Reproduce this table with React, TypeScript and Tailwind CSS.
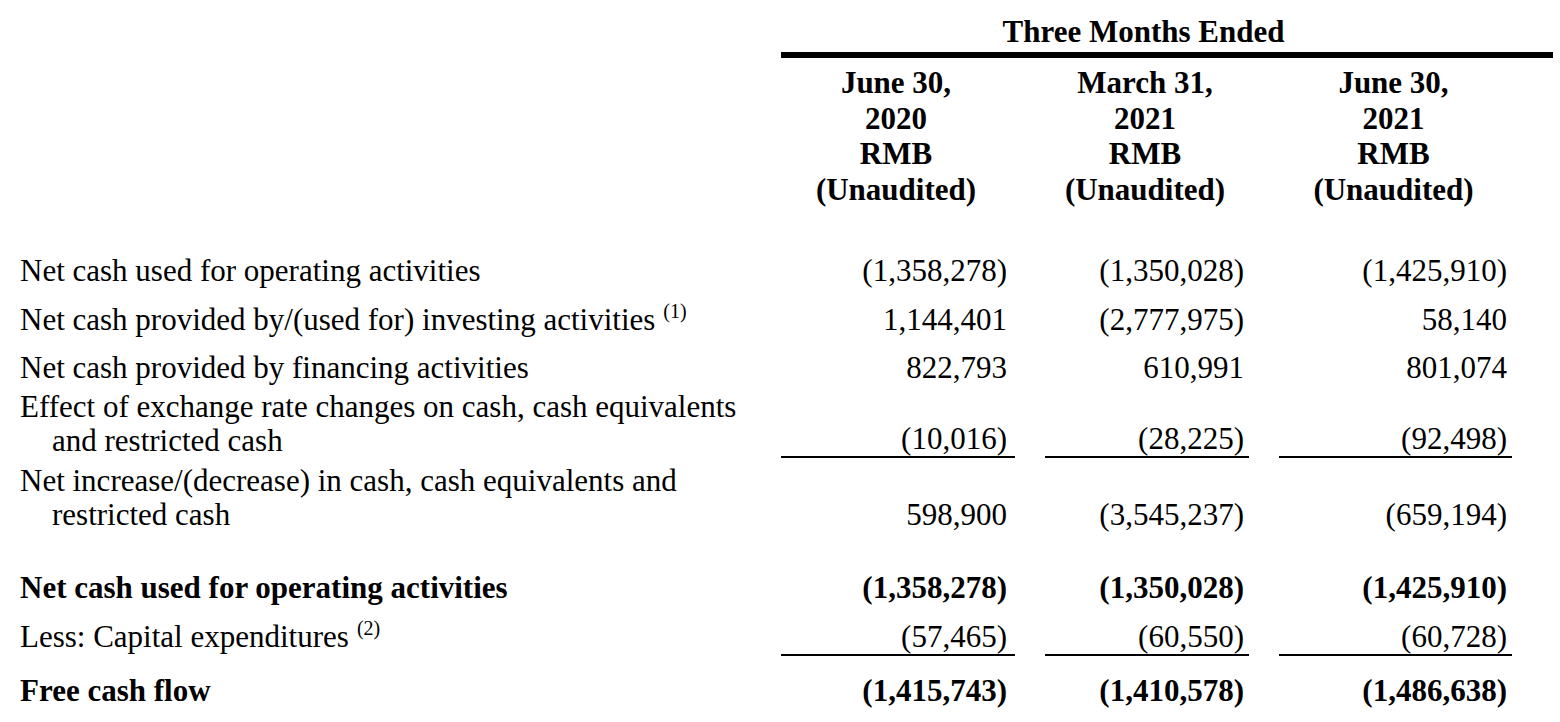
import React from "react";

type Row = {
  label: React.ReactNode;
  values: string[];
  bold?: boolean;
  rule?: boolean;
  gap: string;
};

const grid = "grid grid-cols-[731px_234px_204px_233px] gap-x-[30px]";
const pads = ["pr-[8px]", "pr-[5px]", "pr-[5px]"];

const Note = ({ n }: { n: number }) => (
  <sup className="text-[20px] ml-[8px] -top-[12px]">({n})</sup>
);

const rows: Row[] = [
  {
    label: "Net cash used for operating activities",
    values: ["(1,358,278)", "(1,350,028)", "(1,425,910)"],
    gap: "mt-[47px]",
  },
  {
    label: (
      <>
        Net cash provided by/(used for) investing activities
        <Note n={1} />
      </>
    ),
    values: ["1,144,401", "(2,777,975)", "58,140"],
    gap: "mt-[15px]",
  },
  {
    label: "Net cash provided by financing activities",
    values: ["822,793", "610,991", "801,074"],
    gap: "mt-[14px]",
  },
  {
    label: "Effect of exchange rate changes on cash, cash equivalents and restricted cash",
    values: ["(10,016)", "(28,225)", "(92,498)"],
    rule: true,
    gap: "mt-[5px]",
  },
  {
    label: "Net increase/(decrease) in cash, cash equivalents and restricted cash",
    values: ["598,900", "(3,545,237)", "(659,194)"],
    gap: "mt-[6px]",
  },
  {
    label: "Net cash used for operating activities",
    values: ["(1,358,278)", "(1,350,028)", "(1,425,910)"],
    bold: true,
    gap: "mt-[39px]",
  },
  {
    label: (
      <>
        Less: Capital expenditures
        <Note n={2} />
      </>
    ),
    values: ["(57,465)", "(60,550)", "(60,728)"],
    rule: true,
    gap: "mt-[15px]",
  },
  {
    label: "Free cash flow",
    values: ["(1,415,743)", "(1,410,578)", "(1,486,638)"],
    bold: true,
    gap: "mt-[18px]",
  },
];

const heads = [
  ["June 30,", "2020"],
  ["March 31,", "2021"],
  ["June 30,", "2021"],
];

export default function App() {
  return (
    <div className="w-[1560px] h-[722px] overflow-hidden bg-white text-black pl-[20px] pt-[14px] font-['Liberation_Serif','Times_New_Roman',serif] text-[31px]">
      {/* column headings */}
      <div className={grid}>
        <div />
        <div className="col-span-3 text-center font-bold leading-[36px] pr-[6px]">
          Three Months Ended
        </div>
        <div />
        <div className="col-span-3 mt-[2px] -mr-[41px] h-[6px] bg-black" />
        <div />
        {heads.map((h, i) => (
          <div
            key={i}
            className="mt-[7px] text-center font-bold leading-[35.6px] pr-[4px]"
          >
            <div>{h[0]}</div>
            <div>{h[1]}</div>
            <div>RMB</div>
            <div>(Unaudited)</div>
          </div>
        ))}
      </div>

      {/* cash flow rows */}
      {rows.map((row, i) => (
        <div
          key={i}
          className={`${grid} ${row.gap} leading-[34px] ${
            row.bold ? "font-bold" : ""
          }`}
        >
          <div className="pl-[32px] -indent-[32px]">{row.label}</div>
          {row.values.map((v, j) => (
            <div
              key={j}
              className={`self-end text-right ${pads[j]} ${
                row.rule ? "border-b-2 border-black" : ""
              }`}
            >
              {v}
            </div>
          ))}
        </div>
      ))}
    </div>
  );
}
